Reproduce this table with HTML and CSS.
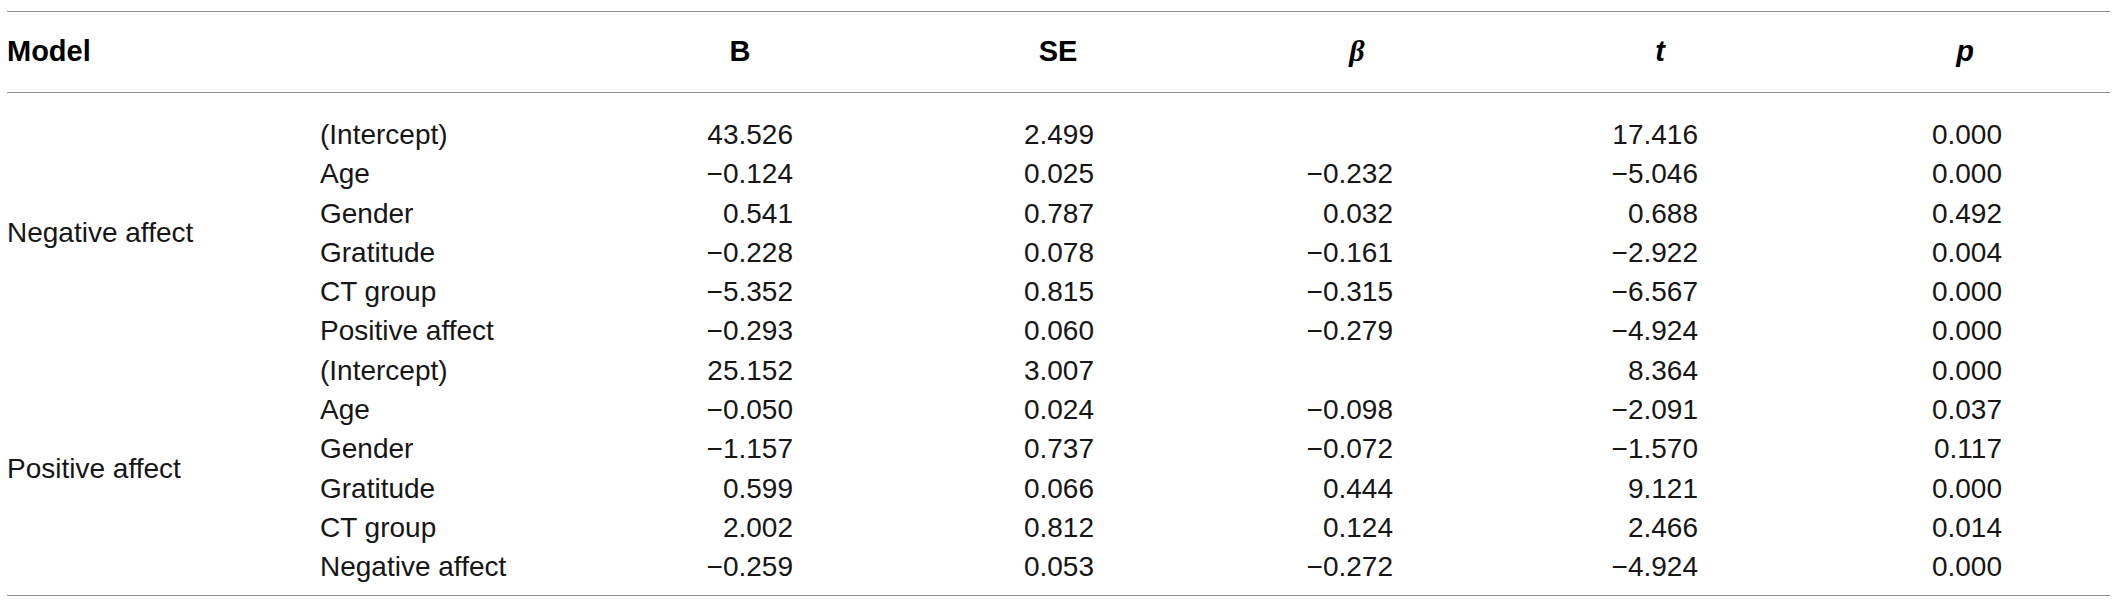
FILE: index.html
```html
<!DOCTYPE html>
<html>
	<head>
		<meta charset="UTF-8">
		<title>Regression</title>
		<link rel="stylesheet" href="styles.css">
	</head>
	<body>
		<table class="reg">
			<colgroup>
				<col class="c-model">
				<col class="c-var">
				<col class="c-b">
				<col class="c-se">
				<col class="c-beta">
				<col class="c-t">
				<col class="c-p">
			</colgroup>
			<thead>
				<tr>
					<th colspan="2" class="lead">Model</th>
					<th>B</th>
					<th>SE</th>
					<th><i class="greek">β</i></th>
					<th><i>t</i></th>
					<th><i>p</i></th>
				</tr>
			</thead>
			<tbody>
				<tr>
					<td rowspan="6" class="grp">Negative affect</td>
					<td>(Intercept)</td><td>43.526</td><td>2.499</td><td></td><td>17.416</td><td>0.000</td>
				</tr>
				<tr><td>Age</td><td>−0.124</td><td>0.025</td><td>−0.232</td><td>−5.046</td><td>0.000</td></tr>
				<tr><td>Gender</td><td>0.541</td><td>0.787</td><td>0.032</td><td>0.688</td><td>0.492</td></tr>
				<tr><td>Gratitude</td><td>−0.228</td><td>0.078</td><td>−0.161</td><td>−2.922</td><td>0.004</td></tr>
				<tr><td>CT group</td><td>−5.352</td><td>0.815</td><td>−0.315</td><td>−6.567</td><td>0.000</td></tr>
				<tr><td>Positive affect</td><td>−0.293</td><td>0.060</td><td>−0.279</td><td>−4.924</td><td>0.000</td></tr>
				<tr>
					<td rowspan="6" class="grp grp-end">Positive affect</td>
					<td>(Intercept)</td><td>25.152</td><td>3.007</td><td></td><td>8.364</td><td>0.000</td>
				</tr>
				<tr><td>Age</td><td>−0.050</td><td>0.024</td><td>−0.098</td><td>−2.091</td><td>0.037</td></tr>
				<tr><td>Gender</td><td>−1.157</td><td>0.737</td><td>−0.072</td><td>−1.570</td><td>0.117</td></tr>
				<tr><td>Gratitude</td><td>0.599</td><td>0.066</td><td>0.444</td><td>9.121</td><td>0.000</td></tr>
				<tr><td>CT group</td><td>2.002</td><td>0.812</td><td>0.124</td><td>2.466</td><td>0.014</td></tr>
				<tr><td>Negative affect</td><td>−0.259</td><td>0.053</td><td>−0.272</td><td>−4.924</td><td>0.000</td></tr>
			</tbody>
		</table>
	</body>
</html>
```

FILE: styles.css
```css
body{
	margin: 0;
	padding: 11px 0 0 7px;
	background: #fff;
	color: #161616;
	font-family: "Liberation Sans", Arial, sans-serif;
}
.reg{
	table-layout: fixed;
	width: 2103px;
	border-collapse: separate;
	border-spacing: 0;
	border-top: 1px solid #8a8a8a;
	border-bottom: 1px solid #8a8a8a;
	font-size: 28px;
}
.c-model{ width: 313px; }
.c-var{ width: 258px; }
.c-b{ width: 324px; }
.c-se{ width: 312px; }
.c-beta{ width: 286px; }
.c-t{ width: 320px; }
.c-p{ width: 290px; }

th{
	height: 78px;
	padding: 0 0 2px;
	border-bottom: 1px solid #8a8a8a;
	font-size: 29px;
	font-weight: bold;
	text-align: center;
	vertical-align: middle;
	color: #000;
}
th.lead{
	text-align: left;
}
th i{
	font-style: italic;
}
.greek{
	font-family: "Liberation Serif", "Times New Roman", serif;
	font-size: 30px;
}

td{
	padding: 0;
	line-height: 39.3px;
	white-space: nowrap;
	vertical-align: middle;
}
td:nth-last-child(-n+5){
	text-align: right;
}
td:nth-last-child(5){ padding-right: 109px; }
td:nth-last-child(4){ padding-right: 120px; }
td:nth-last-child(3){ padding-right: 107px; }
td:nth-last-child(2){ padding-right: 122px; }
td:nth-last-child(1){ padding-right: 108px; }

tbody tr:first-child td{
	padding-top: 22px;
}
tbody tr:last-child td,
td.grp-end{
	padding-bottom: 8px;
}
```
